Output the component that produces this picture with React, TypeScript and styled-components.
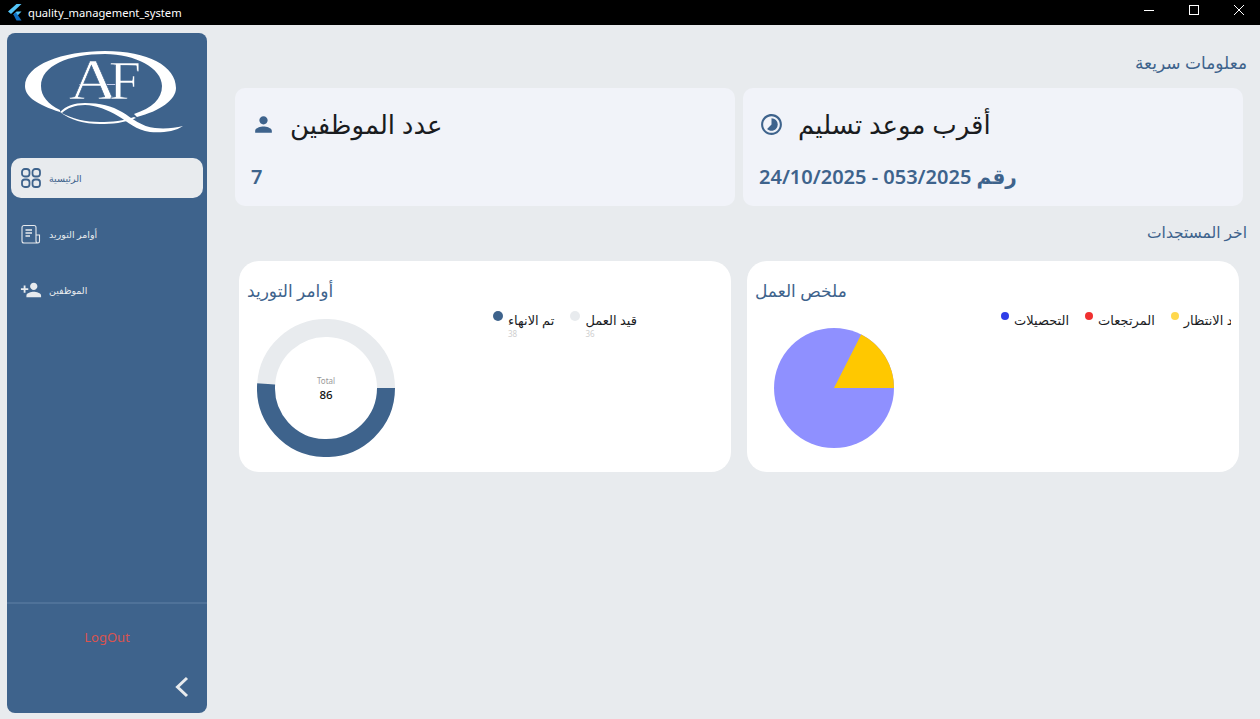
import React from 'react'
import styled, { createGlobalStyle } from 'styled-components'
import { MdPerson, MdPersonAdd, MdTimelapse } from 'react-icons/md'

const BLUE = '#3e638c'
const PAGE = '#e8ebee'

const GlobalStyle = createGlobalStyle`
  html, body { margin: 0; padding: 0; height: 100%; overflow: hidden; }
  body { background: ${PAGE}; font-family: "Noto Sans", "DejaVu Sans", sans-serif; }
  * { box-sizing: border-box; }
`

const FlutterLogo = () => (
  <svg width="14" height="17" viewBox="0 0 14 17">
    <polygon points="8.5,0 13.5,0 3,10 0,7.5" fill="#54c5f8" />
    <polygon points="8.5,7.5 13.5,7.5 8.2,13 5.4,10.6" fill="#54c5f8" />
    <polygon points="5.4,10.6 8,8.4 13.5,16.6 8.5,16.6" fill="#0f6fc4" />
  </svg>
)

const GridIcon = () => (
  <svg width="20" height="20" viewBox="0 0 20 20" fill="none" stroke="currentColor" strokeWidth="1.8">
    <rect x="1" y="1" width="7.5" height="7.5" rx="2.800" />
    <rect x="11.500" y="1" width="7.5" height="7.5" rx="2.800" />
    <rect x="1" y="11.500" width="7.5" height="7.5" rx="2.800" />
    <rect x="11.500" y="11.500" width="7.5" height="7.5" rx="2.800" />
  </svg>
)

const OrdersIcon = () => (
  <svg width="20" height="20" viewBox="0 0 20 20" fill="none" stroke="currentColor" strokeWidth="1.1">
    <path d="M3 1.500h10a2 2 0 0 1 2 2V17a2 2 0 0 0 2 2H3a2 2 0 0 1-2-2V3.500a2 2 0 0 1 2-2z" />
    <path d="M15 11h3.500v6a1.800 1.800 0 0 1-1.500 2" />
    <path d="M4.500 6h6.500M4.500 9h6.500M4.500 12h4.500" strokeWidth="1.400" />
  </svg>
)

const Logo = () => (
  <svg width="160" height="86" viewBox="25 50 160 86">
    <path
      fill="#fff"
      d="M60 112C38 105 25 97 25 86C25 65 62 51 105 51C148 51 176 66 176 88C176 100 160 111 137 117L134 114C152 108 162 99 162 86C162 68 135 54 105 54C68 54 41 66 41 86C41 96 48 104 60 110Z"
    />
    <path
      fill="#fff"
      d="M60 112C66 106 74 103 85 103C100 103 112 106 122 112C132 118 142 127 155 128C165 129 175 128 183 126C175 132 160 133 150 132C136 130 128 122 118 116C108 110 96 105 85 105C75 105 67 108 62 113Z"
    />
    <path
      fill="#fff"
      d="M60 112C72 119 86 122 100 122C112 122 124 121 134 117L136 118C124 123 112 124 100 124C84 124 70 120 60 112Z"
    />
    <path d="M79 84.500H116" stroke="#c6cdec" strokeWidth="1" />
    <LogoLetter x="69" y="99" fontSize="58" textLength="49" lengthAdjust="spacingAndGlyphs">A</LogoLetter>
    <LogoLetter x="109" y="99" fontSize="54" textLength="32" lengthAdjust="spacingAndGlyphs">F</LogoLetter>
  </svg>
)

const App = () => {
  return (
    <Window>
      <GlobalStyle />
      <TitleBar>
        <FlutterLogo />
        <AppName>quality_management_system</AppName>
        <WindowControls>
          <WindowButton>
            <svg width="12" height="12" viewBox="0 0 12 12"><path d="M1 6.500h10" stroke="#fff" /></svg>
          </WindowButton>
          <WindowButton>
            <svg width="12" height="12" viewBox="0 0 12 12"><rect x="1.500" y="1.500" width="9" height="9" fill="none" stroke="#fff" /></svg>
          </WindowButton>
          <WindowButton>
            <svg width="12" height="12" viewBox="0 0 12 12"><path d="M1 1l10 10M11 1L1 11" stroke="#fff" /></svg>
          </WindowButton>
        </WindowControls>
      </TitleBar>
      <Body>
        <Sidebar>
          <LogoWrap><Logo /></LogoWrap>
          <Nav>
            <NavItem $active>
              <NavIcon><GridIcon /></NavIcon>
              <NavLabel>الرئيسية</NavLabel>
            </NavItem>
            <NavItem>
              <NavIcon><OrdersIcon /></NavIcon>
              <NavLabel>أوامر التوريد</NavLabel>
            </NavItem>
            <NavItem>
              <NavIcon><MdPersonAdd size={26} /></NavIcon>
              <NavLabel>الموظفين</NavLabel>
            </NavItem>
          </Nav>
          <SideFooter>
            <LogOut>LogOut</LogOut>
            <Collapse>
              <svg width="18" height="22" viewBox="0 0 18 22" fill="none" stroke="#e8ebee" strokeWidth="3">
                <path d="M14 2L4.500 11 14 20" />
              </svg>
            </Collapse>
          </SideFooter>
        </Sidebar>
        <Main>
          <SectionTitle>معلومات سريعة</SectionTitle>
          <CardGrid>
            <InfoCard>
              <InfoHead>
                <MdTimelapse size={25} color={BLUE} />
                <InfoTitle>أقرب موعد تسليم</InfoTitle>
              </InfoHead>
              <InfoValue>24/10/2025 - 053/2025 رقم</InfoValue>
            </InfoCard>
            <InfoCard>
              <InfoHead>
                <MdPerson size={25} color={BLUE} />
                <InfoTitle>عدد الموظفين</InfoTitle>
              </InfoHead>
              <InfoValue>7</InfoValue>
            </InfoCard>
          </CardGrid>
          <UpdatesTitle>اخر المستجدات</UpdatesTitle>
          <ChartGrid>
            <ChartCard>
              <ChartTitle>ملخص العمل</ChartTitle>
              <ChartRow>
                <ChartBox $top={27} $left={19}>
                  <svg width="120" height="120" viewBox="0 0 120 120">
                    <circle cx="60" cy="60" r="60" fill="#8f90ff" />
                    <path d="M60 60L120 60A60 60 0 0 0 87.200 6.500Z" fill="#ffc800" />
                  </svg>
                </ChartBox>
                <Legend>
                  <LegendItem>
                    <Dot $color="#2f3de8" $size={8} />
                    <LegendLabel>التحصيلات</LegendLabel>
                  </LegendItem>
                  <LegendItem>
                    <Dot $color="#f03030" $size={8} />
                    <LegendLabel>المرتجعات</LegendLabel>
                  </LegendItem>
                  <LegendItem>
                    <Dot $color="#ffd84d" $size={8} />
                    <LegendLabel>قيد الانتظار</LegendLabel>
                  </LegendItem>
                </Legend>
              </ChartRow>
            </ChartCard>
            <ChartCard>
              <ChartTitle>أوامر التوريد</ChartTitle>
              <ChartRow>
                <ChartBox $top={18} $left={10}>
                  <DonutWrap>
                    <svg width="138" height="138" viewBox="0 0 138 138" fill="none" strokeWidth="18">
                      <path d="M9.150 64.800A60 60 0 0 1 129 69" stroke={PAGE} />
                      <path d="M129 69A60 60 0 1 1 9.150 64.800" stroke={BLUE} />
                    </svg>
                    <DonutCenter>
                      <TotalLabel>Total</TotalLabel>
                      <TotalValue>86</TotalValue>
                    </DonutCenter>
                  </DonutWrap>
                </ChartBox>
                <Legend>
                  <LegendItem>
                    <Dot $color={BLUE} $size={10} />
                    <div>
                      <LegendLabel>تم الانهاء</LegendLabel>
                      <LegendCount>38</LegendCount>
                    </div>
                  </LegendItem>
                  <LegendItem>
                    <Dot $color={PAGE} $size={10} />
                    <div>
                      <LegendLabel>قيد العمل</LegendLabel>
                      <LegendCount>36</LegendCount>
                    </div>
                  </LegendItem>
                </Legend>
              </ChartRow>
            </ChartCard>
          </ChartGrid>
        </Main>
      </Body>
    </Window>
  )
}

export default App

const LogoLetter = styled.text`
  font-family: "Liberation Serif", serif;
  fill: #fff;
  stroke: ${BLUE};
  stroke-width: 0.6px;
`
const Window = styled.div`
  width: 1260px;
  height: 719px;
  display: flex;
  flex-direction: column;
  background: ${PAGE};
  overflow: hidden;
`
const TitleBar = styled.header`
  height: 25px;
  background: #000;
  display: flex;
  align-items: center;
  padding-left: 8px;
  flex-shrink: 0;
`
const AppName = styled.span`
  margin-left: 6px;
  color: #fff;
  font-size: 11.2px;
`
const WindowControls = styled.div`
  margin-left: auto;
  margin-right: -1px;
  display: flex;
  height: 100%;
`
const WindowButton = styled.div`
  width: 45px;
  height: 19px;
  display: flex;
  align-items: center;
  justify-content: center;
`
const Body = styled.div`
  flex: 1;
  display: flex;
  min-height: 0;
  padding: 8px 0 6px 7px;
`
const Sidebar = styled.aside`
  width: 200px;
  background: ${BLUE};
  border-radius: 8px;
  display: flex;
  flex-direction: column;
  flex-shrink: 0;
`
const LogoWrap = styled.div`
  height: 125px;
  padding: 17px 0 0 18px;
  line-height: 0;
`
const Nav = styled.nav`
  display: flex;
  flex-direction: column;
  gap: 16px;
  padding: 0 4px;
`
const NavItem = styled.div<{ $active?: boolean }>`
  height: 40px;
  border-radius: 10px;
  display: flex;
  align-items: center;
  padding-left: 9px;
  background: ${(p) => (p.$active ? PAGE : 'transparent')};
  color: ${(p) => (p.$active ? BLUE : PAGE)};
`
const NavIcon = styled.span`
  width: 22px;
  display: flex;
  justify-content: center;
`
const NavLabel = styled.span`
  margin-left: 7px;
  font-size: 9.5px;
  font-weight: 500;
`
const SideFooter = styled.div`
  margin-top: auto;
  height: 111px;
  border-top: 2px solid #4f7299;
  display: flex;
  flex-direction: column;
  align-items: center;
  position: relative;
`
const LogOut = styled.div`
  margin-top: 24px;
  color: #d9534f;
  font-size: 13px;
`
const Collapse = styled.div`
  position: absolute;
  right: 16px;
  bottom: 15px;
  line-height: 0;
`
const Main = styled.main`
  flex: 1;
  min-width: 0;
  padding: 20px 13px 0 28px;
  direction: rtl;
`
const SectionTitle = styled.h2`
  margin: 0 0 15px;
  height: 20px;
  line-height: 20px;
  font-size: 17px;
  font-weight: 500;
  color: ${BLUE};
`
const UpdatesTitle = styled(SectionTitle)`
  margin: 16px 0 0;
  font-size: 15.5px;
`
const CardGrid = styled.div`
  display: grid;
  grid-template-columns: 500px 500px;
  gap: 8px;
  padding-right: 4px;
`
const InfoCard = styled.section`
  height: 118px;
  background: #f1f3f9;
  border-radius: 10px;
  padding: 16px;
  direction: ltr;
  display: flex;
  flex-direction: column;
`
const InfoHead = styled.div`
  height: 40px;
  display: flex;
  align-items: center;
  gap: 14px;
`
const InfoTitle = styled.span`
  font-size: 26px;
  color: #1a1c1f;
`
const InfoValue = styled.div`
  margin-top: 19px;
  font-size: 20px;
  font-weight: 600;
  color: ${BLUE};
`
const ChartGrid = styled.div`
  margin-top: 19px;
  display: grid;
  grid-template-columns: 492px 492px;
  gap: 16px;
  padding-right: 8px;
`
const ChartCard = styled.section`
  height: 211px;
  background: #fff;
  border-radius: 20px;
  padding: 20px 8px 0;
  direction: ltr;
`
const ChartTitle = styled.h3`
  margin: 0;
  height: 20px;
  line-height: 20px;
  font-size: 17px;
  font-weight: 500;
  color: ${BLUE};
`
const ChartRow = styled.div`
  display: flex;
`
const ChartBox = styled.div<{ $top: number; $left: number }>`
  width: 245px;
  flex-shrink: 0;
  padding: ${(p) => p.$top}px 0 0 ${(p) => p.$left}px;
  line-height: 0;
`
const DonutWrap = styled.div`
  position: relative;
  width: 138px;
  height: 138px;
`
const DonutCenter = styled.div`
  position: absolute;
  inset: 0;
  display: flex;
  flex-direction: column;
  align-items: center;
  justify-content: center;
`
const TotalLabel = styled.span`
  font-size: 8px;
  line-height: 12px;
  color: #999;
`
const TotalValue = styled.span`
  font-size: 11.5px;
  line-height: 15px;
  font-weight: 500;
  color: #111;
`
const Legend = styled.div`
  width: 231px;
  height: 40px;
  overflow: hidden;
  display: flex;
  gap: 16px;
  white-space: nowrap;
  padding: 10px 0 0 1px;
`
const LegendItem = styled.div`
  display: flex;
  flex-shrink: 0;
  gap: 5px;
`
const Dot = styled.span<{ $color: string; $size: number }>`
  width: ${(p) => p.$size}px;
  height: ${(p) => p.$size}px;
  margin-top: ${(p) => (10 - p.$size) / 2}px;
  border-radius: 50%;
  background: ${(p) => p.$color};
  flex-shrink: 0;
`
const LegendLabel = styled.div`
  font-size: 13px;
  line-height: 18px;
  color: #1a1c1f;
`
const LegendCount = styled.div`
  font-size: 8px;
  line-height: 10px;
  color: #cfcfcf;
`
